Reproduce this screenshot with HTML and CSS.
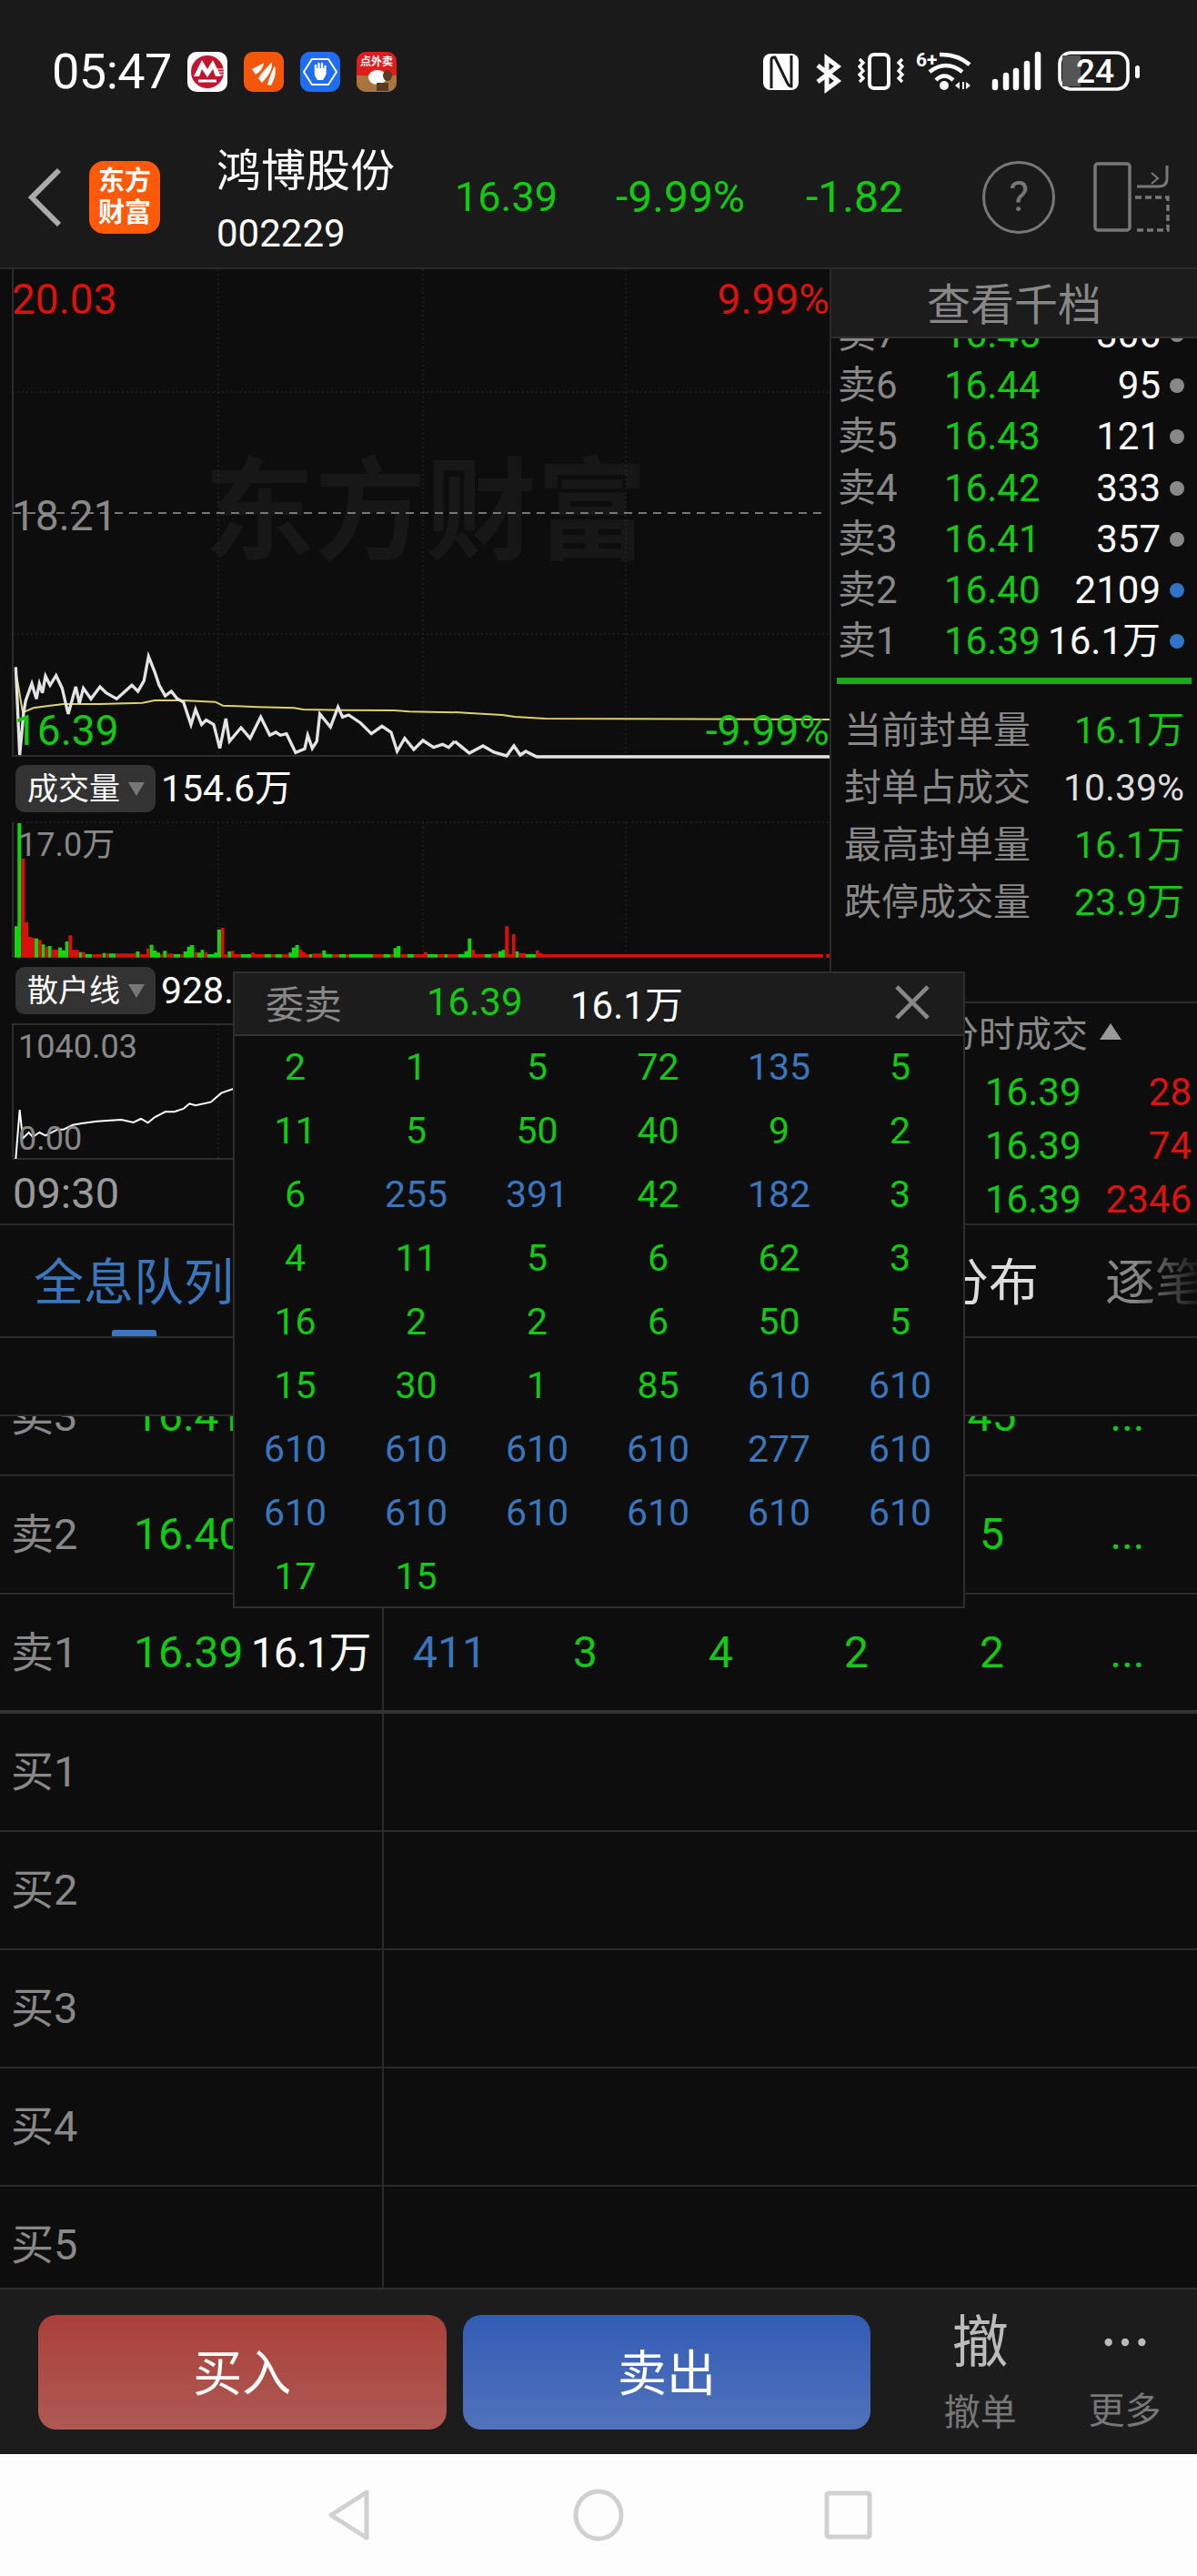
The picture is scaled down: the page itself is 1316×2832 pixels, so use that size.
FILE: index.html
```html
<!DOCTYPE html>
<html lang="zh-CN">
<head>
    <meta charset="UTF-8" />
    <meta name="viewport" content="width=device-width, initial-scale=1.0" />
    <title>鸿博股份</title>
    <link rel="stylesheet" href="styles.css">
</head>
<body>
<div class="app">

    <!-- status bar + stock title -->
    <header class="topbar">
        <div class="status">
            <span class="time">05:47</span>
            <svg class="app-icon" viewBox="0 0 44 44">
                <rect width="44" height="44" rx="10" fill="#fff"/>
                <circle cx="22" cy="22" r="18" fill="#c2152f"/>
                <path d="M7 27 16 9l6 10 6-10 9 18h-6l-3-8-6 9-6-9-3 8z" fill="#fff"/>
                <path d="M12 32h20" stroke="#fff" stroke-width="3"/>
                <path d="M31 19h9M32 22h8M33 25h7" stroke="#fff" stroke-width="1.2"/>
            </svg>
            <svg class="app-icon" viewBox="0 0 44 44">
                <rect width="44" height="44" rx="10" fill="#f4570c"/>
                <path d="M9 19c5-3 9-4 13-7-1 6-4 10-9 13z" fill="#fff"/>
                <path d="M16 29c4-7 10-12 15-18 1 8-4 16-11 23z" fill="#fff"/>
                <path d="M26 36c2-8 5-14 8-21 2 8 0 15-4 22z" fill="#fff"/>
            </svg>
            <svg class="app-icon" viewBox="0 0 44 44">
                <rect width="44" height="44" rx="11" fill="#1f6df0"/>
                <path d="M13 8h18l9 14-9 14H13L4 22z" fill="none" stroke="#fff" stroke-width="2"/>
                <path d="M16 18h12v8l-3 5h-6l-3-5z" fill="#fff"/>
                <path d="M17 24v-9M20.5 24v-11M24 24v-11M27.5 24v-8" stroke="#fff" stroke-width="2.4" stroke-linecap="round"/>
            </svg>
            <svg class="app-icon" viewBox="0 0 44 44">
                <rect width="44" height="44" rx="10" fill="#e01c1c"/>
                <path d="M0 26h44v8a10 10 0 0 1-10 10H10A10 10 0 0 1 0 34z" fill="#a8743f"/>
                <text class="app-icon-text" x="22" y="15">点外卖</text>
                <ellipse cx="23" cy="28" rx="10" ry="8" fill="#fff"/>
                <ellipse cx="34" cy="26" rx="5" ry="6" fill="#5b3a20"/>
                <rect x="22" y="34" width="13" height="9" fill="#5b3a20"/>
            </svg>

            <svg class="status-right" viewBox="830 45 440 70">
                <rect x="839" y="59" width="39" height="40" rx="8" fill="#fff"/>
                <path d="M848 97V66q0-3 3-3h1l13 27q2 5 5 5V61" fill="none" stroke="#1a1a1a" stroke-width="3"/>
                <path d="M899 72 921 89 909 98V64L921 73 899 90" fill="none" stroke="#fff" stroke-width="5"/>
                <rect x="956" y="60" width="21" height="37" rx="5" fill="none" stroke="#fff" stroke-width="4"/>
                <path d="M945 65l4 4-4 4 4 5-4 4 4 4-4 4M992 65l-4 4 4 4-4 5 4 4-4 4 4 4" fill="none" stroke="#fff" stroke-width="3.2"/>
                <text class="status-small" x="1007" y="73">6+</text>
                <path d="M1033 60Q1052 59 1066 71M1022 79Q1040 65 1058 79M1029 88Q1038 79 1048 88" fill="none" stroke="#fff" stroke-width="4.5"/>
                <circle cx="1038" cy="94" r="5" fill="#fff"/>
                <path d="M1050 94l5-4v8zM1058 90h2v8h-2zM1062 90l5 4-5 4z" fill="#fff"/>
                <path d="M1094 90v6M1106 83v13M1117 78v18M1129 70v26M1141 60v36" stroke="#fff" stroke-width="6.5" stroke-linecap="round"/>
                <rect x="1165" y="58" width="75" height="40" rx="12" fill="none" stroke="#fff" stroke-width="3.6"/>
                <path d="M1168 61h20v34h-20z" fill="#555"/>
                <text class="status-battery" x="1204" y="91">24</text>
                <rect x="1248" y="72" width="5" height="14" rx="2.5" fill="#fff"/>
            </svg>
        </div>
        <div class="stock">
            <svg class="back" viewBox="0 0 40 66">
                <path d="M35 3 5 33l30 30" fill="none" stroke="#aaa" stroke-width="6"/>
            </svg>
            <div class="logo"><span>东方</span><span>财富</span></div>
            <div class="stock-name">
                <div class="stock-title">鸿博股份</div>
                <div class="stock-code">002229</div>
            </div>
            <span class="quote quote-price">16.39</span>
            <span class="quote quote-pct">-9.99%</span>
            <span class="quote quote-chg">-1.82</span>
            <div class="help">?</div>
            <svg class="split" viewBox="1200 176 88 82">
                <rect x="1204" y="180" width="38" height="73" rx="3" fill="none" stroke="#777" stroke-width="3.5"/>
                <path d="M1283 182v14q0 9-9 9h-24" fill="none" stroke="#777" stroke-width="3"/>
                <path d="M1266 190l7 6-7 6" fill="none" stroke="#777" stroke-width="2"/>
                <path d="M1248 217h36v36h-36" fill="none" stroke="#777" stroke-width="3.5" stroke-dasharray="7 4"/>
            </svg>
        </div>
    </header>

    <!-- charts and order book -->
    <section class="market">
        <div class="charts">
            <div class="chart chart-price">
                <div class="watermark">东方财富</div>
                <svg class="chart-svg" viewBox="0 296 912 535">
                    <path class="grid-dot" d="M14 431H912M14 697H912M240 296V831M465 296V831M688 296V831"/>
                    <path class="axis" d="M14 296V831H912"/>
                    <path class="mid-line" d="M14 564H908"/>
                    <g transform="translate(0 700) scale(.3333)">
                        <polyline class="avg-line" points="55,130 75,250 110,235 160,228 210,222 330,222 470,218 510,210 600,210 710,215 735,227 850,232 970,235 1000,240 1130,242 1300,243 1350,247 1500,250"/>
                        <polyline class="price-line" points="52,100 65,390 78,250 85,210 105,155 120,205 130,155 140,185 150,130 165,160 185,128 205,170 225,255 250,165 262,220 275,170 300,205 330,165 350,185 385,205 435,160 455,180 475,145 490,65 510,115 525,160 545,195 565,180 585,205 605,215 630,290 645,240 665,290 680,275 705,290 725,368 745,270 757,345 795,300 825,335 860,265 890,325 910,315 925,325 945,320 975,382 1005,370 1015,325 1030,368 1045,345 1055,255 1090,298 1115,232 1130,265 1150,258 1190,285 1225,320 1260,295 1290,315 1310,378 1335,335 1365,372 1395,342 1430,365 1460,355 1480,365 1500,345"/>
                    </g>
                    <polyline class="avg-line-page" points="500,783 552,786 566,788 599,790 912,791"/>
                    <polyline class="price-line-page" points="500,815 516,828 531,820 543,827 557,831 565,820 572,830 578,826 590,832 912,832"/>
                </svg>
                <span class="chart-label label-high">20.03</span>
                <span class="chart-label label-high-pct">9.99%</span>
                <span class="chart-label label-mid">18.21</span>
                <span class="chart-label label-low">16.39</span>
                <span class="chart-label label-low-pct">-9.99%</span>
            </div>

            <div class="indicator">
                <div class="chip">成交量<i class="chip-arrow"></i></div>
                <span class="indicator-value">154.6万</span>
            </div>

            <div class="chart chart-volume">
                <svg class="chart-svg" viewBox="0 904 912 149">
                    <path class="grid-dot" d="M14 904H912M240 904V1053M465 904V1053M688 904V1053"/>
                    <path class="axis" d="M14 904V1053"/>
                    <g transform="translate(0 900) scale(.3333)">
                        <path class="bar-green" d="M48 355H58V458H48zM58 15H70V458H58zM114 395H126V458H114zM137 415H148V458H137zM158 420H170V458H158zM192 425H204V458H192zM204 435H215V458H204zM215 405H226V458H215zM260 440H270V458H260zM282 447H304V458H282zM338 443H349V458H338zM360 445H382V458H360zM448 438H460V458H448zM494 416H506V458H494zM506 435H517V458H506zM517 442H528V458H517zM538 436H550V458H538zM572 447H595V458H572zM605 438H617V458H605zM617 422H628V458H617zM628 417H640V458H628zM651 442H662V458H651zM662 433H673V458H662zM684 447H706V458H684zM706 442H717V458H706zM717 366H729V458H717zM751 438H762V458H751zM795 447H828V458H795zM873 447H895V458H873zM907 447H930V458H907zM952 442H963V458H952zM963 425H974V458H963zM974 417H986V458H974zM1020 447H1030V458H1020zM1063 435H1075V458H1063zM1075 447H1097V458H1075zM1119 447H1141V458H1119zM1152 447H1230V458H1152zM1264 447H1287V458H1264zM1298 427H1309V458H1298zM1309 420H1321V458H1309zM1343 447H1365V458H1343z"/>
                        <path class="bar-red" d="M70 132H82V458H70zM82 342H93V458H82zM93 390H104V458H93zM104 393H114V458H104zM126 400H137V458H126zM148 423H158V458H148zM170 432H192V458H170zM226 385H238V458H226zM238 433H260V458H238zM270 440H282V458H270zM306 447H336V458H306zM349 445H360V458H349zM382 445H448V458H382zM460 447H483V458H460zM483 428H494V458H483zM528 448H538V458H528zM550 445H572V458H550zM595 447H605V458H595zM640 440H651V458H640zM673 440H684V458H673zM729 360H740V458H729zM740 448H751V458H740zM762 436H773V458H762zM773 447H795V458H773zM828 442H840V458H828zM840 447H873V458H840zM895 447H907V458H895zM930 447H952V458H930zM986 432H997V458H986zM997 440H1008V458H997zM1008 447H1020V458H1008zM1030 445H1063V458H1030zM1097 447H1119V458H1097zM1141 447H1152V458H1141zM1230 447H1264V458H1230zM1287 447H1298V458H1287zM1321 447H1343V458H1321zM1365 447H1398V458H1365zM1398 441H1410V458H1398z"/>
                    </g>
                    <g transform="translate(470 900) scale(.3333)">
                        <path class="bar-green" d="M0 447H33V458H0zM55 447H66V458H55zM100 447H122V458H100zM122 437H133V458H122zM133 395H145V458H133zM189 447H211V458H189zM234 437H245V458H234zM245 433H256V458H245zM290 438H301V458H290zM324 447H357V458H324z"/>
                        <path class="bar-red" d="M33 447H55V458H33zM66 447H100V458H66zM145 433H156V458H145zM156 447H189V458H156zM211 445H234V458H211zM256 355H268V458H256zM268 447H279V458H268zM279 381H290V458H279zM301 443H324V458H301zM357 435H368V458H357zM368 443H379V458H368zM379 447H1305V458H379zM1315 447H1327V458H1315z"/>
                    </g>
                </svg>
                <span class="chart-label label-vol">17.0万</span>
            </div>

            <div class="indicator">
                <div class="chip">散户线<i class="chip-arrow"></i></div>
                <span class="indicator-value">928.23</span>
            </div>

            <div class="chart chart-mini">
                <svg class="chart-svg" viewBox="0 1126 912 148">
                    <path class="grid-dot" d="M240 1126V1274M465 1126V1274M688 1126V1274"/>
                    <path class="axis" d="M14 1274V1126H912M14 1274H912"/>
                    <g transform="translate(0 1060) scale(.3333)">
                        <polyline class="mini-line" points="52,642 65,480 75,575 95,555 108,570 130,555 150,565 190,545 210,545 240,530 270,525 320,518 400,513 440,522 465,510 488,523 510,505 545,487 575,487 605,477 625,460 645,466 695,455 730,425 768,412 840,390"/>
                    </g>
                </svg>
                <span class="chart-label label-mini-high">1040.03</span>
                <span class="chart-label label-mini-low">0.00</span>
            </div>

            <div class="time-axis">09:30</div>
        </div>

        <aside class="depth">
            <div class="depth-head">查看千档</div>
            <div class="book">
                <div class="book-rows">
                    <div class="book-row"><span class="book-label">卖7</span><span class="green">16.45</span><span class="book-vol">306</span><i class="dot"></i></div>
                    <div class="book-row"><span class="book-label">卖6</span><span class="green">16.44</span><span class="book-vol">95</span><i class="dot"></i></div>
                    <div class="book-row"><span class="book-label">卖5</span><span class="green">16.43</span><span class="book-vol">121</span><i class="dot"></i></div>
                    <div class="book-row"><span class="book-label">卖4</span><span class="green">16.42</span><span class="book-vol">333</span><i class="dot"></i></div>
                    <div class="book-row"><span class="book-label">卖3</span><span class="green">16.41</span><span class="book-vol">357</span><i class="dot"></i></div>
                    <div class="book-row"><span class="book-label">卖2</span><span class="green">16.40</span><span class="book-vol">2109</span><i class="dot dot-blue"></i></div>
                    <div class="book-row"><span class="book-label">卖1</span><span class="green">16.39</span><span class="book-vol">16.1万</span><i class="dot dot-blue"></i></div>
                </div>
            </div>
            <div class="book-bar"></div>
            <div class="stats">
                <div class="stat"><span class="stat-label">当前封单量</span><span class="green">16.1万</span></div>
                <div class="stat"><span class="stat-label">封单占成交</span><span class="stat-white">10.39%</span></div>
                <div class="stat"><span class="stat-label">最高封单量</span><span class="green">16.1万</span></div>
                <div class="stat"><span class="stat-label">跌停成交量</span><span class="green">23.9万</span></div>
            </div>
            <div class="ticks">
                <div class="ticks-head">分时成交<i class="ticks-arrow"></i></div>
                <div class="tick"><span class="green">16.39</span><span class="red">28</span></div>
                <div class="tick"><span class="green">16.39</span><span class="red">74</span></div>
                <div class="tick"><span class="green">16.39</span><span class="red">2346</span></div>
            </div>
        </aside>
    </section>

    <!-- tabs -->
    <nav class="tabs">
        <span class="tab tab-active">全息队列</span>
        <span class="tab tab-dist">成交分布</span>
        <span class="tab tab-fade">逐笔</span>
    </nav>
    <div class="table-head"></div>

    <!-- queue table -->
    <div class="queue">
        <div class="queue-rows">
            <div class="queue-row"><div class="queue-left"><span class="q-label">卖3</span><span class="q-price green">16.41</span><span class="q-vol">357</span></div><div class="queue-right"><span class="blue">100</span><span class="green">20</span><span class="green">30</span><span class="green">12</span><span class="green">45</span><span class="green">...</span></div></div>
            <div class="queue-row"><div class="queue-left"><span class="q-label">卖2</span><span class="q-price green">16.40</span><span class="q-vol">2109</span></div><div class="queue-right"><span class="blue">500</span><span class="green">10</span><span class="green">8</span><span class="green">6</span><span class="green">5</span><span class="green">...</span></div></div>
            <div class="queue-row queue-row-last"><div class="queue-left"><span class="q-label">卖1</span><span class="q-price green">16.39</span><span class="q-vol">16.1万</span></div><div class="queue-right"><span class="blue">411</span><span class="green">3</span><span class="green">4</span><span class="green">2</span><span class="green">2</span><span class="green">...</span></div></div>
            <div class="queue-row"><div class="queue-left"><span class="q-label">买1</span></div><div class="queue-right"></div></div>
            <div class="queue-row"><div class="queue-left"><span class="q-label">买2</span></div><div class="queue-right"></div></div>
            <div class="queue-row"><div class="queue-left"><span class="q-label">买3</span></div><div class="queue-right"></div></div>
            <div class="queue-row"><div class="queue-left"><span class="q-label">买4</span></div><div class="queue-right"></div></div>
            <div class="queue-row"><div class="queue-left"><span class="q-label">买5</span></div><div class="queue-right"></div></div>
        </div>
    </div>

    <!-- trade buttons -->
    <footer class="actions">
        <button class="trade trade-buy">买入</button>
        <button class="trade trade-sell">卖出</button>
        <div class="tool"><span class="tool-icon">撤</span><span class="tool-label">撤单</span></div>
        <div class="tool">
            <svg class="tool-dots" viewBox="0 0 56 12">
                <circle cx="6" cy="6" r="5"/><circle cx="28" cy="6" r="5"/><circle cx="50" cy="6" r="5"/>
            </svg>
            <span class="tool-label">更多</span>
        </div>
    </footer>

    <div class="navbar">
        <svg class="nav-svg" viewBox="0 2698 1316 134">
            <path d="M403 2740v50l-39-25z" />
            <ellipse cx="658" cy="2765" rx="25" ry="26"/>
            <rect x="909" y="2741" width="47" height="48" rx="2"/>
        </svg>
    </div>

    <!-- order detail popup -->
    <div class="popup">
        <div class="popup-head">
            <span class="popup-title">委卖</span>
            <span class="popup-price green">16.39</span>
            <span class="popup-vol">16.1万</span>
            <svg class="popup-close" viewBox="0 0 40 40"><path d="M2 2 38 38M38 2 2 38" stroke="#888" stroke-width="5"/></svg>
        </div>
        <div class="popup-grid">
            <span class="green">2</span><span class="green">1</span><span class="green">5</span><span class="green">72</span><span class="blue">135</span><span class="green">5</span>
            <span class="green">11</span><span class="green">5</span><span class="green">50</span><span class="green">40</span><span class="green">9</span><span class="green">2</span>
            <span class="green">6</span><span class="blue">255</span><span class="blue">391</span><span class="green">42</span><span class="blue">182</span><span class="green">3</span>
            <span class="green">4</span><span class="green">11</span><span class="green">5</span><span class="green">6</span><span class="green">62</span><span class="green">3</span>
            <span class="green">16</span><span class="green">2</span><span class="green">2</span><span class="green">6</span><span class="green">50</span><span class="green">5</span>
            <span class="green">15</span><span class="green">30</span><span class="green">1</span><span class="green">85</span><span class="blue">610</span><span class="blue">610</span>
            <span class="blue">610</span><span class="blue">610</span><span class="blue">610</span><span class="blue">610</span><span class="blue">277</span><span class="blue">610</span>
            <span class="blue">610</span><span class="blue">610</span><span class="blue">610</span><span class="blue">610</span><span class="blue">610</span><span class="blue">610</span>
            <span class="green">17</span><span class="green">15</span>
        </div>
    </div>
</div>
</body>
</html>
```

FILE: styles.css
```css
* {
    box-sizing: border-box;
}

body {
    margin: 0;
    background-color: #0d0d0d;
    font-family: Roboto, "Noto Sans CJK SC", sans-serif;
    color: #fff;
}

.app {
    position: relative;
    width: 1316px;
    height: 2832px;
    overflow: hidden;
    display: flex;
    flex-direction: column;
}

.green { color: #13c913; }
.red { color: #d9130f; }
.blue { color: #3a76be; }

/* top bar */
.topbar {
    height: 296px;
    flex: none;
    padding-top: 57px;
    background-color: #1a1a1a;
    border-bottom: 2px solid #2a2a2a;
}

.status {
    position: relative;
    display: flex;
    align-items: center;
    height: 44px;
    padding-left: 57px;
}

.time {
    width: 131px;
    margin-right: 18px;
    font-size: 54px;
    line-height: 44px;
    letter-spacing: -.5px;
}

.app-icon {
    width: 44px;
    height: 44px;
    margin-right: 18px;
}

.app-icon-text {
    font-size: 12px;
    font-weight: 700;
    fill: #fff;
    text-anchor: middle;
}

.status-right {
    position: absolute;
    left: 830px;
    top: -12px;
    width: 440px;
    height: 70px;
}

.status-small {
    font-size: 21px;
    font-weight: 700;
    fill: #fff;
}

.status-battery {
    font-size: 37px;
    font-weight: 500;
    fill: #fff;
    text-anchor: middle;
}

.stock {
    display: flex;
    align-items: center;
    height: 100px;
    margin-top: 66px;
    padding-left: 30px;
}

.back {
    width: 40px;
    height: 66px;
}

.logo {
    width: 78px;
    height: 80px;
    margin-left: 28px;
    display: flex;
    flex-direction: column;
    align-items: center;
    justify-content: center;
    background-color: #ff5a0a;
    border-radius: 16px;
    font-size: 29px;
    line-height: 35px;
    font-weight: 700;
}

.stock-name {
    align-self: flex-start;
    width: 262px;
    margin-left: 62px;
}

.stock-title {
    font-size: 49px;
    line-height: 44px;
}

.stock-code {
    font-size: 42px;
    line-height: 44px;
    margin-top: 24px;
}

.quote {
    font-size: 48px;
    line-height: 44px;
    color: #13c913;
}

.quote-price { width: 177px; font-size: 45px; }
.quote-pct { width: 209px; }
.quote-chg { width: 194px; }

.help {
    width: 80px;
    height: 80px;
    border: 3px solid #777;
    border-radius: 50%;
    text-align: center;
    font-size: 46px;
    line-height: 72px;
    color: #777;
}

.split {
    width: 88px;
    height: 82px;
    margin-left: 40px;
}

/* charts */
.market {
    display: flex;
    height: 1051px;
    flex: none;
    border-bottom: 2px solid #2a2a2a;
}

.charts {
    width: 912px;
    flex: none;
}

.chart {
    position: relative;
}

.chart-svg {
    position: absolute;
    left: 0;
    top: 0;
    width: 100%;
    height: 100%;
    overflow: visible;
}

.chart-price { height: 535px; }
.chart-volume { height: 149px; }
.chart-mini { height: 148px; }

.grid-dot {
    fill: none;
    stroke: #2c2c2c;
    stroke-width: 1;
    stroke-dasharray: 2 3;
}

.axis {
    fill: none;
    stroke: #2c2c2c;
    stroke-width: 2;
}

.mid-line {
    fill: none;
    stroke: #777;
    stroke-width: 2;
    stroke-dasharray: 9 7;
}

.avg-line {
    fill: none;
    stroke: #dcd16a;
    stroke-width: 6;
}

.price-line {
    fill: none;
    stroke: #e4e4e4;
    stroke-width: 10;
}

.avg-line-page {
    fill: none;
    stroke: #dcd16a;
    stroke-width: 2;
}

.price-line-page {
    fill: none;
    stroke: #e4e4e4;
    stroke-width: 3.5;
}

.mini-line {
    fill: none;
    stroke: #fff;
    stroke-width: 6;
}

.bar-green { fill: #0fd60f; }
.bar-red { fill: #d90f0f; }

.watermark {
    position: absolute;
    left: 224px;
    top: 198px;
    font-size: 122px;
    line-height: 140px;
    font-weight: 700;
    color: #171717;
    white-space: nowrap;
}

.chart-label {
    position: absolute;
    font-size: 46px;
    line-height: 46px;
}

.label-high { left: 13px; top: 10px; color: #d9130f; }
.label-high-pct { right: 0; top: 10px; color: #d9130f; }
.label-mid { left: 13px; top: 248px; color: #888; }
.label-low { left: 15px; top: 484px; color: #13c913; }
.label-low-pct { right: 0; top: 484px; color: #13c913; }

.label-vol {
    left: 20px;
    top: 7px;
    font-size: 36px;
    line-height: 36px;
    color: #888;
}

.label-mini-high,
.label-mini-low {
    left: 20px;
    font-size: 36px;
    line-height: 36px;
    color: #888;
}

.label-mini-high { top: 7px; }
.label-mini-low { top: 108px; }

.indicator {
    display: flex;
    align-items: center;
    height: 73px;
    padding-left: 17px;
    padding-bottom: 1px;
}

.chip {
    display: flex;
    align-items: center;
    width: 154px;
    height: 52px;
    padding-left: 13px;
    background-color: #333;
    border-radius: 10px;
    font-size: 34px;
    line-height: 52px;
}

.chip-arrow {
    width: 0;
    height: 0;
    margin-left: 9px;
    border-left: 9px solid transparent;
    border-right: 9px solid transparent;
    border-top: 15px solid #777;
}

.indicator-value {
    margin-left: 6px;
    font-size: 41px;
    line-height: 52px;
}

.time-axis {
    height: 73px;
    padding: 16px 0 0 14px;
    font-size: 47px;
    line-height: 44px;
    color: #999;
}

/* right side */
.depth {
    flex: 1;
    display: flex;
    flex-direction: column;
    border-left: 2px solid #2a2a2a;
}

.depth-head {
    height: 76px;
    flex: none;
    background-color: #1c1c1c;
    border-bottom: 2px solid #2e2e2e;
    text-align: center;
    font-size: 48px;
    line-height: 80px;
    color: #888;
}

.book {
    height: 373px;
    flex: none;
    overflow: hidden;
}

.book-rows {
    margin-top: -32px;
}

.book-row {
    position: relative;
    display: flex;
    align-items: center;
    height: 56.2px;
    padding-left: 7px;
    font-size: 42px;
    line-height: 56px;
}

.book-label {
    width: 117px;
    color: #888;
}

.book-vol {
    position: absolute;
    right: 40px;
    white-space: nowrap;
}

.dot {
    position: absolute;
    right: 14px;
    width: 16px;
    height: 16px;
    border-radius: 50%;
    background-color: #888;
}

.dot-blue {
    background-color: #2f74c8;
}

.book-bar {
    height: 7px;
    flex: none;
    margin: 0 6px;
    background-color: #1aa81a;
}

.stats {
    height: 349px;
    flex: none;
    padding: 20px 14px 0 14px;
}

.stat {
    display: flex;
    justify-content: space-between;
    height: 63px;
    font-size: 41px;
    line-height: 63px;
}

.stat-label {
    color: #888;
}

.stat-white {
    color: #ddd;
}

.ticks {
    flex: 1;
    border-top: 2px solid #2a2a2a;
}

.ticks-head {
    display: flex;
    align-items: center;
    justify-content: flex-end;
    height: 68px;
    padding: 0 83px 6px 0;
    font-size: 40px;
    color: #888;
}

.ticks-arrow {
    width: 0;
    height: 0;
    margin-left: 13px;
    border-left: 12px solid transparent;
    border-right: 12px solid transparent;
    border-bottom: 18px solid #999;
}

.tick {
    display: flex;
    justify-content: space-between;
    height: 59px;
    padding: 0 6px 0 169px;
    font-size: 42px;
    line-height: 59px;
}

/* tabs */
.tabs {
    position: relative;
    display: flex;
    height: 124px;
    flex: none;
    border-bottom: 2px solid #2a2a2a;
    font-size: 55px;
    line-height: 126px;
    white-space: nowrap;
    overflow: hidden;
}

.tab {
    flex: none;
}

.tab-active {
    position: relative;
    margin-left: 37px;
    width: 220px;
    color: #3a76be;
}

.tab-active::after {
    content: "";
    position: absolute;
    left: 86px;
    bottom: 0;
    width: 49px;
    height: 7px;
    border-radius: 3px 3px 0 0;
    background-color: #3a76be;
}

.tab-dist {
    margin-left: 665px;
    width: 220px;
    color: #ddd;
}

.tab-fade {
    margin-left: 73px;
    color: #888;
    -webkit-mask-image: linear-gradient(to right, #000 30%, transparent 100%);
    mask-image: linear-gradient(to right, #000 30%, transparent 100%);
}

.table-head {
    height: 86px;
    flex: none;
    border-bottom: 2px solid #2a2a2a;
}

/* queue */
.queue {
    height: 958px;
    flex: none;
    overflow: hidden;
}

.queue-rows {
    margin-top: -64px;
}

.queue-row {
    display: flex;
    height: 130px;
    border-bottom: 2px solid #2a2a2a;
    font-size: 47px;
    line-height: 128px;
}

.queue-row-last {
    height: 131px;
    border-bottom: 4px solid #333;
}

.queue-left {
    display: flex;
    width: 422px;
    flex: none;
    padding-left: 12px;
    border-right: 2px solid #2a2a2a;
}

.q-label {
    width: 135px;
    color: #888;
}

.q-price {
    width: 126px;
    font-size: 48px;
}

.q-vol {
    width: 134px;
    text-align: right;
    white-space: nowrap;
    letter-spacing: -1.5px;
}

.queue-right {
    display: grid;
    grid-template-columns: repeat(6, 149px);
    margin-left: -2px;
    text-align: center;
    font-size: 48px;
}

/* bottom actions */
.actions {
    display: flex;
    height: 183px;
    flex: none;
    padding: 28px 0 0 42px;
    background-color: #1c1c1c;
    border-top: 2px solid #2e2e2e;
}

.trade {
    width: 449px;
    height: 126px;
    margin-right: 18px;
    padding-bottom: 6px;
    border: none;
    border-radius: 20px;
    font-family: inherit;
    font-size: 54px;
    color: #fff;
}

.trade-buy {
    background: linear-gradient(#ab403a, #ad5953);
}

.trade-sell {
    margin-right: 0;
    background: linear-gradient(#325cb5, #5272bb);
}

.tool {
    display: flex;
    flex-direction: column;
    align-items: center;
    width: 159px;
    height: 126px;
}

.trade-sell + .tool {
    margin-left: 41px;
}

.tool-icon {
    font-size: 62px;
    line-height: 62px;
    color: #bbb;
}

.tool-dots {
    width: 56px;
    height: 12px;
    margin: 25px 0;
    fill: #bbb;
}

.tool-label {
    margin-top: 26px;
    font-size: 40px;
    line-height: 40px;
    color: #777;
}

.navbar {
    flex: 1;
    background-color: #fdfdfd;
}

.nav-svg {
    display: block;
    width: 100%;
    height: 134px;
    fill: none;
    stroke: #d0d0d0;
    stroke-width: 5;
    stroke-linejoin: round;
}

/* popup over the page */
.popup {
    position: absolute;
    left: 256px;
    top: 1068px;
    width: 805px;
    height: 700px;
    background-color: #0d0d0d;
    border: 2px solid #2e2e2e;
}

.popup-head {
    display: flex;
    align-items: center;
    height: 69px;
    padding: 0 37px 4px 34px;
    background-color: #1c1c1c;
    border-bottom: 2px solid #333;
    font-size: 42px;
}

.popup-title {
    width: 177px;
    color: #888;
}

.popup-price {
    width: 158px;
}

.popup-close {
    width: 38px;
    height: 38px;
    margin-left: auto;
}

.popup-grid {
    display: grid;
    grid-template-columns: repeat(6, 133px);
    grid-auto-rows: 70px;
    margin-top: -1px;
    text-align: center;
    font-size: 41px;
    line-height: 70px;
}
```
